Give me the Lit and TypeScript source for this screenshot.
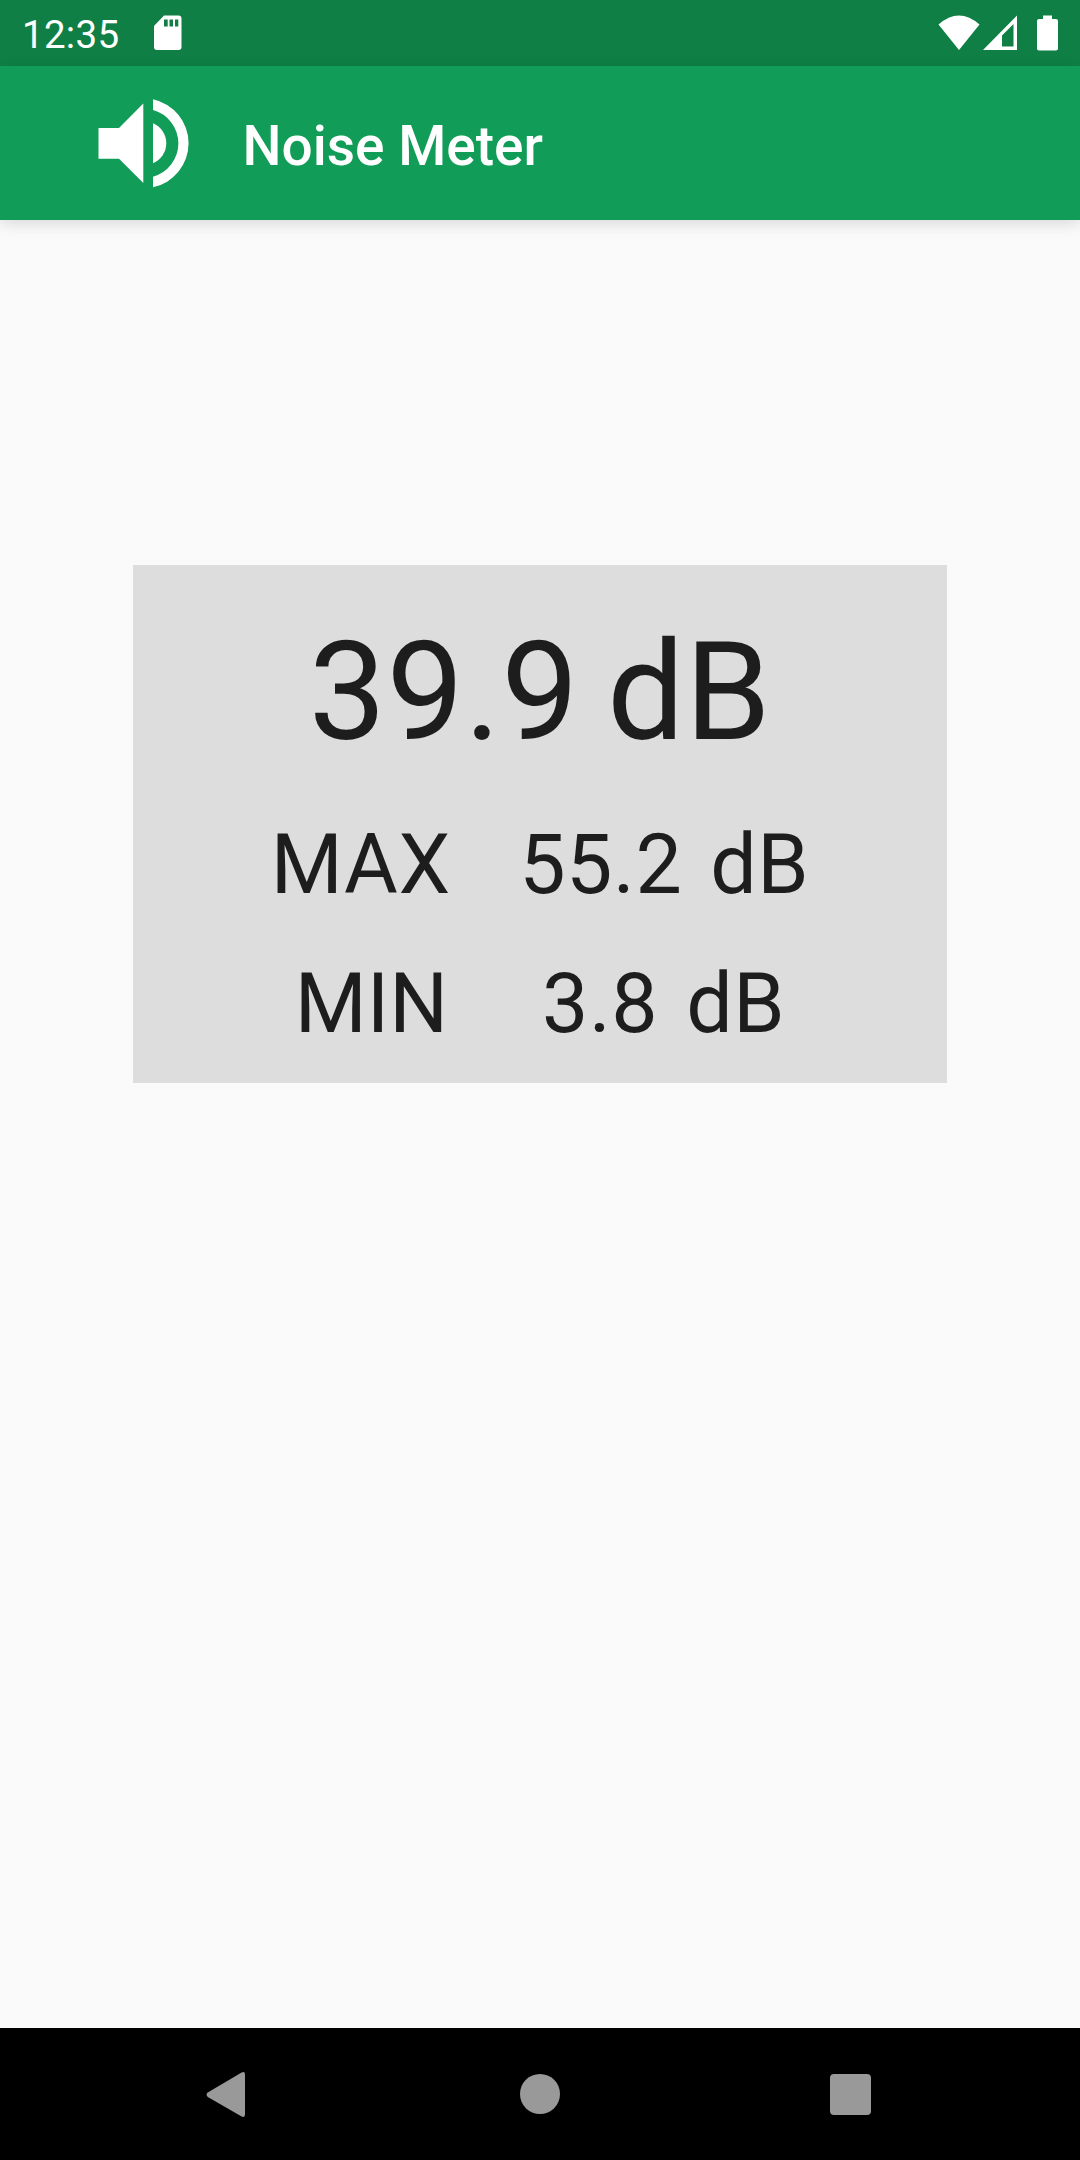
import { LitElement, html, css } from "lit";
import { customElement, property, state } from "lit/decorators.js";

@customElement("status-bar")
class StatusBar extends LitElement {
  @property() time = "";

  static styles = css`
    :host {
      display: flex;
      align-items: center;
      justify-content: space-between;
      box-sizing: border-box;
      height: 66px;
      padding: 0 22px 0 22px;
      background: #0f7f45;
      color: #fff;
    }
    .side {
      display: flex;
      align-items: center;
    }
    .time {
      font-size: 38.5px;
      line-height: 45px;
      letter-spacing: 0.3px;
      padding-top: 3px;
    }
    .sd {
      margin-left: 34px;
    }
    svg {
      display: block;
      fill: currentColor;
    }
    .signal {
      margin-left: 3px;
    }
    .battery {
      margin-left: 20px;
    }
  `;

  render() {
    return html`
      <div class="side">
        <span class="time">${this.time}</span>
        <svg class="sd" width="29" height="36" viewBox="0 0 29 36">
          <path
            fill-rule="evenodd"
            d="M11 0.5H25.5Q28.5 0.5 28.5 3.500V32Q28.500 35 25.500 35H4Q1 35 1 32V11ZM11 4.500V11.500H14.700V4.500ZM16.500 4.500V11.500H20V4.500ZM22 4.500V11.500H25.300V4.500Z"
          />
        </svg>
      </div>
      <div class="side">
        <svg width="42" height="36" viewBox="0 0 42 36">
          <path d="M0.500 9.500Q21 -8.500 41.500 9.500L21 35Z" />
        </svg>
        <svg class="signal" width="34" height="36" viewBox="0 0 34 36">
          <path fill-rule="evenodd" d="M34 0.500V35H0ZM30.500 9L19 20.500V31.500H30.500Z" />
        </svg>
        <svg class="battery" width="21" height="36" viewBox="0 0 21 36">
          <path
            d="M6 0.500H15V4H19Q21 4 21 6V33.500Q21 35.500 19 35.500H2Q0 35.500 0 33.500V6Q0 4 2 4H6Z"
          />
        </svg>
      </div>
    `;
  }
}

@customElement("app-bar")
class AppBar extends LitElement {
  @property() heading = "";

  static styles = css`
    :host {
      display: flex;
      align-items: center;
      box-sizing: border-box;
      height: 154px;
      padding: 0 98px;
      background: #119d58;
      color: #fff;
      box-shadow: 0 4px 14px rgba(0, 0, 0, 0.13);
      position: relative;
    }
    svg {
      display: block;
      fill: currentColor;
    }
    .heading {
      margin: 6px 0 0 53.5px;
      font-size: 55px;
      line-height: 64px;
      font-weight: 500;
    }
  `;

  render() {
    return html`
      <svg width="91" height="90" viewBox="0 0 91 90">
        <path d="M0.500 30H21L45.300 5.500V85L21 60.700H0.500Z" />
        <path d="M55 25.300A21.700 21.700 0 0 1 55 65.300Z" />
        <path d="M55 1.300A45 45 0 0 1 55 89.300V78.700A34.600 34.600 0 0 0 55 12Z" />
      </svg>
      <span class="heading">${this.heading}</span>
    `;
  }
}

@customElement("nav-bar")
class NavBar extends LitElement {
  static styles = css`
    :host {
      display: grid;
      grid-template-columns: repeat(3, 310px);
      justify-content: center;
      align-items: center;
      justify-items: center;
      height: 132px;
      background: #000;
    }
    svg {
      display: block;
      fill: #999;
    }
  `;

  render() {
    return html`
      <svg width="48" height="48" viewBox="0 0 48 48">
        <path
          d="M35.600 2.500Q39 1 39 4.500V44.500Q39 48 35.600 46.500L1.800 26.900Q-0.700 24.700 1.800 22.600Z"
        />
      </svg>
      <svg width="48" height="48" viewBox="0 0 48 48">
        <circle cx="24" cy="24" r="20" />
      </svg>
      <svg width="48" height="48" viewBox="0 0 48 48">
        <rect x="4" y="4" width="41" height="41" rx="4" />
      </svg>
    `;
  }
}

@customElement("noise-panel")
class NoisePanel extends LitElement {
  @property() current = "";
  @property() max = "";
  @property() min = "";

  static styles = css`
    :host {
      display: flex;
      flex-direction: column;
      align-items: center;
      box-sizing: border-box;
      width: 814px;
      height: 518px;
      padding-top: 47px;
      background: #ddd;
      color: #1d1d1d;
    }
    .row {
      display: flex;
      font-size: 82.5px;
      line-height: 97px;
      letter-spacing: 0.6px;
      white-space: nowrap;
    }
    .current {
      font-size: 137.5px;
      line-height: 161px;
      letter-spacing: 0.5px;
      gap: 28px;
    }
    .max {
      margin-top: 43px;
    }
    .min {
      margin-top: 42px;
    }
    .label {
      margin-right: 68.4px;
    }
    .min .label {
      letter-spacing: 0;
      margin-right: 94px;
    }
    .value {
      margin-right: 27.8px;
    }
  `;

  render() {
    return html`
      <div class="row current"><span>${this.current}</span><span>dB</span></div>
      <div class="row max">
        <span class="label">MAX</span><span class="value">${this.max}</span><span>dB</span>
      </div>
      <div class="row min">
        <span class="label">MIN</span><span class="value">${this.min}</span><span>dB</span>
      </div>
    `;
  }
}

@customElement("app-root")
class AppRoot extends LitElement {
  @state() private current = 39.9;
  @state() private max = 55.2;
  @state() private min = 3.8;

  static styles = css`
    :host {
      display: flex;
      flex-direction: column;
      height: 2160px;
      background: #fafafa;
      font-family: Roboto, "Liberation Sans", sans-serif;
    }
    main {
      flex: 1;
      display: flex;
      flex-direction: column;
      align-items: center;
      padding-top: 345px;
    }
  `;

  render() {
    return html`
      <status-bar time="12:35"></status-bar>
      <app-bar heading="Noise Meter"></app-bar>
      <main>
        <noise-panel
          current=${this.current.toFixed(1)}
          max=${this.max.toFixed(1)}
          min=${this.min.toFixed(1)}
        ></noise-panel>
      </main>
      <nav-bar></nav-bar>
    `;
  }
}
